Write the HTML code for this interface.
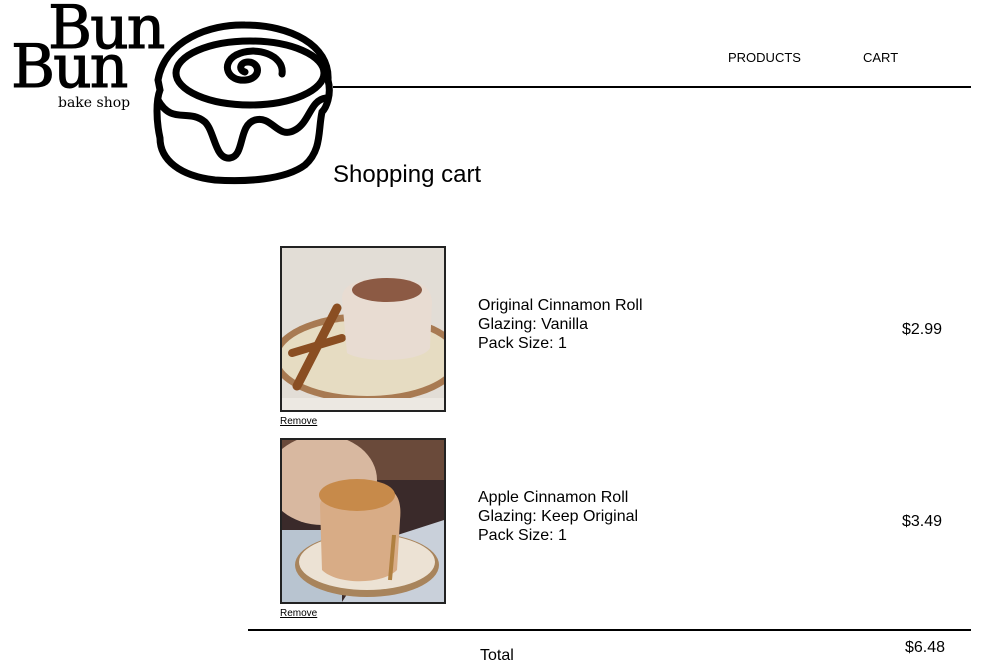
<!DOCTYPE html>
<html><head><style>
body{margin:0;width:984px;height:654px;overflow:hidden;background:#fff;font-family:"Liberation Sans",Arial,sans-serif;color:#000;position:relative}
.a{position:absolute}
.bun{font-family:"DejaVu Serif","Liberation Serif",serif;font-size:60px;line-height:1;letter-spacing:-2px;-webkit-text-stroke:1px #000}
.img{position:absolute;left:280px;width:162px;height:162px;border:2px solid #222;overflow:hidden}
.rm{position:absolute;left:280px;font-size:10px;text-decoration:underline}
.t{position:absolute;left:478px;font-size:16px;line-height:19px}
.p{position:absolute;left:902px;font-size:16px}
</style></head><body>
<div class="a bun" style="left:48px;top:-2px">Bun</div>
<div class="a bun" style="left:11px;top:37px">Bun</div>
<div class="a" style="left:58px;top:95px;font-family:'DejaVu Serif',serif;font-size:14px">bake shop</div>
<svg class="a" style="left:140px;top:15px" width="200" height="175" viewBox="140 15 200 175">
<g fill="none" stroke="#000" stroke-width="7" stroke-linecap="round">
<path d="M158 80 C165 40 210 24 245 25 C290 25 330 45 328 80 C332 95 326 108 322 112 C318 130 322 150 305 165 C285 180 245 182 215 180 C180 176 160 160 160 138 C156 120 156 100 160 90 Z"/>
<ellipse cx="250" cy="73" rx="74" ry="32"/>
<path d="M245 72 C238 70 240 62 248 62 C260 62 262 78 246 80 C228 82 220 64 236 55 C255 45 285 55 282 74"/>
<path d="M158 100 C172 125 188 108 205 122 C215 132 215 160 230 158 C245 156 238 125 255 120 C272 115 278 140 295 130 C310 122 310 100 326 98"/>
</g></svg>
<div class="a" style="left:333px;top:86px;width:638px;height:2px;background:#000"></div>
<div class="a" style="left:728px;top:50px;font-size:13px">PRODUCTS</div>
<div class="a" style="left:863px;top:50px;font-size:13px">CART</div>
<div class="a" style="left:333px;top:161px;font-size:24px">Shopping cart</div>

<div class="img" style="top:246px">
<svg width="162" height="162">
<rect width="162" height="162" fill="#e2ddd6"/>
<ellipse cx="85" cy="110" rx="95" ry="45" fill="#a87a52"/>
<ellipse cx="85" cy="110" rx="88" ry="38" fill="#e6dcc2"/>
<rect x="0" y="150" width="162" height="12" fill="#ece8e2"/>
<path d="M15 138 L55 60" stroke="#8a4e22" stroke-width="9" stroke-linecap="round"/>
<path d="M10 105 L60 90" stroke="#8a4e22" stroke-width="8" stroke-linecap="round"/>
<path d="M60 50 C60 35 80 30 105 30 C130 30 150 35 150 55 L148 100 C140 115 80 115 65 105 Z" fill="#e8dcd2"/>
<ellipse cx="105" cy="42" rx="35" ry="12" fill="#8c5a44"/>
</svg></div>
<div class="rm" style="top:416px">Remove</div>
<div class="t" style="top:296px">Original Cinnamon Roll<br>Glazing: Vanilla<br>Pack Size: 1</div>
<div class="p" style="top:321px">$2.99</div>

<div class="img" style="top:438px">
<svg width="162" height="162">
<rect width="162" height="162" fill="#3a2a2a"/>
<rect x="0" y="0" width="162" height="40" fill="#6a4a3a"/>
<path d="M60 162 L100 100 L162 80 L162 162 Z" fill="#c9d0da"/>
<ellipse cx="40" cy="40" rx="55" ry="45" fill="#d8b8a0"/>
<rect x="0" y="90" width="60" height="72" fill="#b8c4d0"/>
<ellipse cx="85" cy="125" rx="72" ry="32" fill="#a8845c"/>
<ellipse cx="85" cy="122" rx="68" ry="28" fill="#ece2d4"/>
<path d="M38 65 C40 45 75 40 95 45 C115 48 120 60 118 80 L115 130 C100 145 55 145 40 130 Z" fill="#d8ac86"/>
<ellipse cx="75" cy="55" rx="38" ry="16" fill="#c78a4a"/>
<path d="M108 140 L112 95" stroke="#b08040" stroke-width="4"/>
</svg></div>
<div class="rm" style="top:608px">Remove</div>
<div class="t" style="top:488px">Apple Cinnamon Roll<br>Glazing: Keep Original<br>Pack Size: 1</div>
<div class="p" style="top:513px">$3.49</div>

<div class="a" style="left:248px;top:629px;width:723px;height:2px;background:#000"></div>
<div class="a" style="left:480px;top:647px;font-size:16px">Total</div>
<div class="a" style="left:905px;top:639px;font-size:16px">$6.48</div>
</body></html>
